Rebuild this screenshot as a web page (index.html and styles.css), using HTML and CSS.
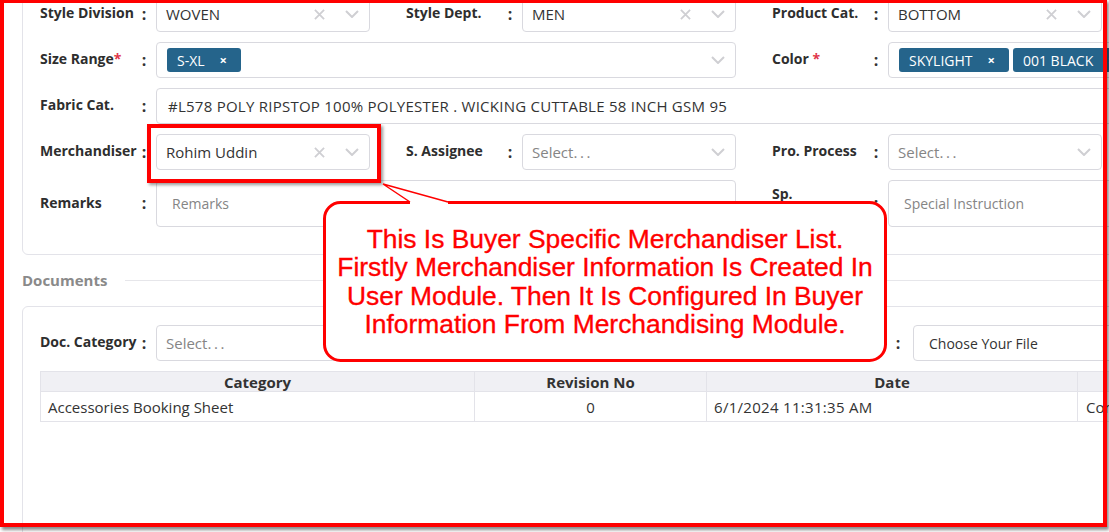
FILE: index.html
```html
<!DOCTYPE html>
<html lang="en">
<head>
<meta charset="utf-8">
<title>Style Information</title>
<link rel="stylesheet" href="styles.css">
</head>
<body>
<div class="page">
  <section class="card form-card">
    <div class="grid">
      <div class="field">
        <span class="label">Style Division</span><span class="colon">:</span>
        <div class="control"><span class="value">WOVEN</span>
          <span class="ind"><svg class="ic-x" viewBox="0 0 12 12"><path d="M1 1L11 11M11 1L1 11"/></svg><svg class="ic-chev" viewBox="0 0 14 8"><path d="M1 1L7 7L13 1"/></svg></span>
        </div>
      </div>
      <div class="field">
        <span class="label">Style Dept.</span><span class="colon">:</span>
        <div class="control"><span class="value">MEN</span>
          <span class="ind"><svg class="ic-x" viewBox="0 0 12 12"><path d="M1 1L11 11M11 1L1 11"/></svg><svg class="ic-chev" viewBox="0 0 14 8"><path d="M1 1L7 7L13 1"/></svg></span>
        </div>
      </div>
      <div class="field">
        <span class="label">Product Cat.</span><span class="colon">:</span>
        <div class="control"><span class="value">BOTTOM</span>
          <span class="ind"><svg class="ic-x" viewBox="0 0 12 12"><path d="M1 1L11 11M11 1L1 11"/></svg><svg class="ic-chev" viewBox="0 0 14 8"><path d="M1 1L7 7L13 1"/></svg></span>
        </div>
      </div>

      <div class="field span2">
        <span class="label">Size Range<span class="req">*</span></span><span class="colon">:</span>
        <div class="control tags"><span class="tag">S-XL<span class="tx">×</span></span>
          <span class="ind"><svg class="ic-chev" viewBox="0 0 14 8"><path d="M1 1L7 7L13 1"/></svg></span>
        </div>
      </div>
      <div class="field">
        <span class="label">Color <span class="req">*</span></span><span class="colon">:</span>
        <div class="control tags wide"><span class="tag">SKYLIGHT<span class="tx">×</span></span><span class="tag">001 BLACK<span class="tx">×</span></span></div>
      </div>

      <div class="field span3">
        <span class="label">Fabric Cat.</span><span class="colon">:</span>
        <div class="control text-in"><span class="value">#L578 POLY RIPSTOP 100% POLYESTER . WICKING CUTTABLE 58 INCH GSM 95</span></div>
      </div>

      <div class="field">
        <span class="label">Merchandiser</span><span class="colon">:</span>
        <div class="control"><span class="value">Rohim Uddin</span>
          <span class="ind"><svg class="ic-x" viewBox="0 0 12 12"><path d="M1 1L11 11M11 1L1 11"/></svg><svg class="ic-chev" viewBox="0 0 14 8"><path d="M1 1L7 7L13 1"/></svg></span>
        </div>
      </div>
      <div class="field">
        <span class="label">S. Assignee</span><span class="colon">:</span>
        <div class="control"><span class="placeholder sel">Select<span class="dots">...</span></span>
          <span class="ind"><svg class="ic-chev" viewBox="0 0 14 8"><path d="M1 1L7 7L13 1"/></svg></span>
        </div>
      </div>
      <div class="field">
        <span class="label">Pro. Process</span><span class="colon">:</span>
        <div class="control"><span class="placeholder sel">Select<span class="dots">...</span></span>
          <span class="ind"><svg class="ic-chev" viewBox="0 0 14 8"><path d="M1 1L7 7L13 1"/></svg></span>
        </div>
      </div>

      <div class="field span2">
        <span class="label">Remarks</span><span class="colon">:</span>
        <div class="control area"><span class="placeholder">Remarks</span></div>
      </div>
      <div class="field">
        <span class="label">Sp. Instruction</span><span class="colon">:</span>
        <div class="control area wide"><span class="placeholder">Special Instruction</span></div>
      </div>
    </div>
  </section>

  <div class="section-title"><span>Documents</span><span class="line"></span></div>

  <section class="card doc-card">
    <div class="doc-row">
      <div class="field">
        <span class="label">Doc. Category</span><span class="colon">:</span>
        <div class="control"><span class="placeholder sel">Select<span class="dots">...</span></span></div>
      </div>
      <div class="field file-field">
        <span class="label">Attachment</span><span class="colon">:</span>
        <div class="control file wide"><span class="file-text">Choose Your File</span></div>
      </div>
    </div>
    <table class="docs">
      <thead>
        <tr><th class="c1">Category</th><th class="c2">Revision No</th><th class="c3">Date</th><th class="c4">Comments</th></tr>
      </thead>
      <tbody>
        <tr><td class="left">Accessories Booking Sheet</td><td class="center">0</td><td class="left date">6/1/2024 11:31:35 AM</td><td class="left pad">Confirmed</td></tr>
      </tbody>
    </table>
  </section>
</div>

<div class="highlight"></div>

<svg class="callout-shape" viewBox="320 180 570 185" width="570" height="185">
  <path class="fill" d="M340.5 202.5 H869.5 A16 16 0 0 1 885.5 218.5 V344.5 A16 16 0 0 1 869.5 360.5 H340.5 A16 16 0 0 1 324.5 344.5 V218.5 A16 16 0 0 1 340.5 202.5 Z M410 203 L383 184 L448 203 Z"/>
  <path class="thick" d="M410 202.5 H340.5 A16 16 0 0 0 324.5 218.5 V344.5 A16 16 0 0 0 340.5 360.5 H869.5 A16 16 0 0 0 885.5 344.5 V218.5 A16 16 0 0 0 869.5 202.5 H448"/>
  <path class="thin" d="M410 202 L383 184 L448 202"/>
</svg>
<div class="callout-text">This Is Buyer Specific Merchandiser List.<br>Firstly Merchandiser Information Is Created In<br>User Module. Then It Is Configured In Buyer<br>Information From Merchandising Module.</div>

<div class="frame"></div>
</body>
</html>
```

FILE: styles.css
```css
* { box-sizing: border-box; }
html, body { margin: 0; padding: 0; background: #fff; }
body {
  font-family: "Open Sans", "Noto Sans", sans-serif;
  font-size: 14px;
  color: #333;
  width: 1109px;
  height: 532px;
  overflow: hidden;
  position: relative;
}
.page {
  width: 1150px;
  padding-left: 22px;
  margin-top: -20px;
}
.card {
  border: 1px solid #e3e3e9;
  border-radius: 6px;
  background: #fff;
}
.form-card { padding: 15px 17px 27px 17px; }
.grid {
  display: grid;
  grid-template-columns: 330px 330px 330px;
  column-gap: 36px;
  row-gap: 10px;
}
.span2 { grid-column: span 2; }
.span3 { grid-column: span 3; }
.field {
  display: grid;
  grid-template-columns: 98px 12px 1fr;
  align-items: center;
}
.label { font-weight: 700; line-height: 18px; padding-bottom: 2px; color: #2e2e2e; }
.req { color: #e0364a; }
.colon { font-weight: 700; font-size: 16px; text-align: center; padding-bottom: 1px; }
.control {
  margin-left: 6px;
  height: 36px;
  border: 1px solid #d9d9df;
  border-radius: 4px;
  display: flex;
  align-items: center;
  padding: 0 10px 0 9px;
  white-space: nowrap;
  overflow: hidden;
  min-width: 0;
}
.control.wide { margin-right: -30px; }
.value { color: #333; font-size: 15px; }
.placeholder { color: #858585; }
.sel { font-size: 15px; }
.dots { letter-spacing: 2.6px; }
.file-text { color: #333; }
.ind {
  margin-left: auto;
  display: flex;
  align-items: center;
  gap: 20px;
}
.ic-x { width: 11px; height: 11px; }
.ic-x path { stroke: #cfcfd3; stroke-width: 2; fill: none; }
.ic-chev { width: 14px; height: 8px; }
.ic-chev path { stroke: #cfcfd3; stroke-width: 2; fill: none; }
.tags { padding-left: 10px; }
.tag {
  display: inline-flex;
  align-items: center;
  height: 24px;
  background: #25648b;
  color: #fff;
  border-radius: 3px;
  padding: 0 14px 0 10px;
  gap: 15px;
  margin-right: 4px;
}
.tx { font-size: 13px; font-weight: 700; }
.text-in { padding-left: 11px; margin-right: -30px; }
.text-in .value { letter-spacing: 0.25px; }
.area { height: 47px; padding-left: 15px; }
.section-title {
  display: flex;
  align-items: center;
  gap: 18px;
  height: 22px;
  margin: 14px 0 15px 0;
  color: #8a8a8a;
  font-weight: 700;
  font-size: 15px;
}
.section-title .line { flex: 1; height: 1px; background: #e6e6ea; }
.doc-card { padding: 18px 17px 200px 17px; }
.doc-row {
  display: grid;
  grid-template-columns: 520px 400px;
  column-gap: 234px;
}
.file-field .control { margin-left: 9px; padding-left: 15px; }
.docs {
  margin-top: 10px;
  border-collapse: collapse;
  table-layout: fixed;
  width: 1337px;
}
.docs th, .docs td { border: 1px solid #e3e3e9; padding: 0; }
.docs th {
  height: 20px;
  background: #f0f0f4;
  font-weight: 700;
  font-size: 15px;
  text-align: center;
  line-height: 18px;
}
.docs td { height: 30px; font-size: 15px; }
.docs td.date { letter-spacing: 0.3px; }
.c1 { width: 434px; }
.c2 { width: 232px; }
.c3 { width: 371px; }
.c4 { width: 300px; }
.left { padding-left: 7px !important; }
.center { text-align: center; }
.pad { padding-left: 8px !important; }

.highlight {
  position: absolute;
  left: 147px;
  top: 124px;
  width: 234px;
  height: 59px;
  border: 4px solid #ff0000;
  box-shadow: 2px 2px 3px rgba(0, 0, 0, 0.4);
}
.callout-shape {
  position: absolute;
  left: 320px;
  top: 180px;
}
.callout-shape .fill { fill: #fff; }
.callout-shape .thick { fill: none; stroke: #ff0000; stroke-width: 3; }
.callout-shape .thin { fill: none; stroke: #ff0000; stroke-width: 1.5; }
.callout-text {
  position: absolute;
  left: 326px;
  top: 205px;
  width: 558px;
  height: 153px;
  display: flex;
  align-items: center;
  justify-content: center;
  text-align: center;
  font-family: "Liberation Sans", Arial, sans-serif;
  font-size: 26.4px;
  line-height: 28.3px;
  color: #ff0000;
  -webkit-text-stroke: 0.35px #ff0000;
}
.frame {
  position: absolute;
  left: 0;
  top: -1px;
  width: 1107px;
  height: 528px;
  border: 4px solid #ff0000;
  box-shadow: 2px 3px 3px rgba(0, 0, 0, 0.45);
  pointer-events: none;
}
```
